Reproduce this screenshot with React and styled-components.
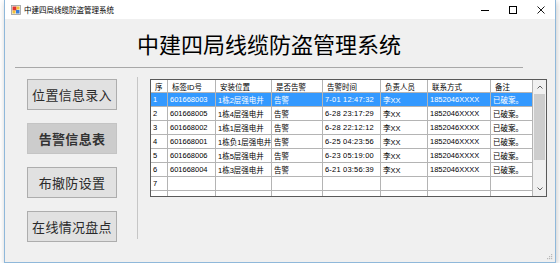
import styled, { createGlobalStyle } from "styled-components";

const GlobalStyle = createGlobalStyle`
    html, body {
        margin: 0;
        padding: 0;
        background: #ffffff;
        font-family: "Noto Sans CJK SC", "Noto Sans", sans-serif;
    }
`

const columns = [
    { title: "序", width: 17 },
    { title: "标签ID号", width: 48 },
    { title: "安装位置", width: 56 },
    { title: "是否告警", width: 51 },
    { title: "告警时间", width: 58 },
    { title: "负责人员", width: 47 },
    { title: "联系方式", width: 63 },
    { title: "备注", width: 42 },
]

const rows = [
    ["1", "601668003", "1栋2层强电井", "告警", "7-01 12:47:32", "李XX", "1852046XXXX", "已破案。"],
    ["2", "601668005", "1栋4层强电井", "告警", "6-28 23:17:29", "李XX", "1852046XXXX", "已破案。"],
    ["3", "601668002", "1栋1层强电井", "告警", "6-28 22:12:12", "李XX", "1852046XXXX", "已破案。"],
    ["4", "601668001", "1栋负1层强电井", "告警", "6-25 04:23:56", "李XX", "1852046XXXX", "已破案。"],
    ["5", "601668006", "1栋5层强电井", "告警", "6-23 05:19:00", "李XX", "1852046XXXX", "已破案。"],
    ["6", "601668004", "1栋3层强电井", "告警", "6-21 03:56:39", "李XX", "1852046XXXX", "已破案。"],
    ["7", "", "", "", "", "", "", ""],
    ["", "", "", "", "", "", "", ""],
]

const menu = ["位置信息录入", "告警信息表", "布撤防设置", "在线情况盘点"]

const Window = styled.div`
    box-sizing: border-box;
    width: 552px;
    height: 263px;
    margin-left: 4px;
    border: 1px solid #8fb8da;
    border-top: none;
    background: #f0f0f0;
    box-shadow: 1px 2px 6px rgba(0, 0, 0, 0.22);
    display: flex;
    flex-direction: column;
    position: relative;
`

const TitleBar = styled.div`
    height: 19px;
    background: #ffffff;
    display: flex;
    align-items: center;
    padding-left: 6px;
    flex-shrink: 0;
`

const Caption = styled.span`
    font-size: 7.5px;
    color: #000;
    margin-left: 3px;
    line-height: 1;
`

const Controls = styled.div`
    margin-left: auto;
    display: flex;
    height: 100%;
`

const ControlButton = styled.div`
    width: 28px;
    height: 100%;
    display: flex;
    align-items: center;
    justify-content: center;
`

const Heading = styled.h1`
    margin: 11px 0 0 10px;
    width: 508px;
    text-align: center;
    font-size: 22px;
    line-height: 26px;
    font-weight: 400;
    color: #000;
`

const Rule = styled.div`
    margin: 11px 0 0 10px;
    width: 508px;
    height: 1px;
    background: #a8a8a8;
`

const Body = styled.div`
    display: flex;
    align-items: flex-start;
    padding: 11px 0 0 22px;
`

const Sidebar = styled.div`
    display: flex;
    flex-direction: column;
    gap: 13px;
    width: 90px;
`

const NavButton = styled.div`
    box-sizing: border-box;
    height: 31px;
    display: flex;
    align-items: center;
    justify-content: center;
    font-size: 13px;
    letter-spacing: 0.3px;
    color: ${p => (p.$active ? "#333333" : "#2a2a2a")};
    font-weight: ${p => (p.$active ? 700 : 400)};
    background: ${p => (p.$active ? "#cccccc" : "#e1e1e1")};
    border: 1px solid ${p => (p.$active ? "#c4c4c4" : "#adadad")};
`

const Divider = styled.div`
    width: 1px;
    height: 162px;
    margin: -2px 12px 0 20px;
    background: #c6c6c6;
`

const GridFrame = styled.div`
    box-sizing: border-box;
    width: 397px;
    height: 118px;
    border: 1px solid #5a5a5a;
    background: #ffffff;
    display: flex;
    overflow: hidden;
`

const Table = styled.div`
    display: grid;
    grid-template-columns: ${p => p.$cols};
    grid-auto-rows: 14px;
    grid-template-rows: 13px;
    align-content: start;
`

const Cell = styled.div`
    box-sizing: border-box;
    border-right: 1px solid #b4b4b4;
    border-bottom: 1px solid #b4b4b4;
    padding-left: ${p => (p.$header ? "4px" : "2px")};
    display: flex;
    align-items: center;
    white-space: nowrap;
    overflow: hidden;
    font-family: "Liberation Sans", "Noto Sans CJK SC", sans-serif;
    font-size: 7.5px;
    color: ${p => (p.$selected ? "#ffffff" : "#000000")};
    background: ${p => (p.$selected ? "#3399ff" : "#ffffff")};
    letter-spacing: ${p => (p.$mono ? "0.2px" : "0")};
`

const Scrollbar = styled.div`
    width: 13px;
    flex-shrink: 0;
    background: #f0f0f0;
    display: flex;
    flex-direction: column;
`

const ScrollArrow = styled.div`
    height: 14px;
    display: flex;
    align-items: center;
    justify-content: center;
    flex-shrink: 0;
`

const Thumb = styled.div`
    height: 66px;
    margin: 0 1px;
    background: #cdcdcd;
`

const Track = styled.div`
    flex: 1;
`

const Grip = styled.svg`
    position: absolute;
    right: 2px;
    bottom: 2px;
`

const AppIcon = () => (
    <svg width="10" height="10" viewBox="0 0 10 10">
        <rect x="0.5" y="0.5" width="9" height="9" fill="#f4f4f4" stroke="#9a9a9a" strokeWidth="0.8" />
        <rect x="1.5" y="1.5" width="4" height="4" fill="#e0332c" />
        <rect x="5.5" y="1.5" width="3" height="3" fill="#f2c037" />
        <rect x="1.5" y="5.5" width="3" height="3" fill="#f2c037" />
        <rect x="5" y="5" width="3.5" height="3.5" fill="#3b7dd8" />
    </svg>
)

const Chevron = ({ up }) => (
    <svg width="6" height="4" viewBox="0 0 6 4">
        <path d={up ? "M0.5 3.5 L3 1 L5.5 3.5" : "M0.5 0.5 L3 3 L5.5 0.5"} fill="none" stroke="#606060" strokeWidth="1" />
    </svg>
)

const App = () => {
    const cols = columns.map(c => `${c.width}px`).join(" ")
    return (
        <>
            <GlobalStyle />
            <Window>
                <TitleBar>
                    <AppIcon />
                    <Caption>中建四局线缆防盗管理系统</Caption>
                    <Controls>
                        <ControlButton>
                            <svg width="8" height="8" viewBox="0 0 8 8">
                                <path d="M0 4.5 H8" stroke="#000" strokeWidth="1" />
                            </svg>
                        </ControlButton>
                        <ControlButton>
                            <svg width="8" height="8" viewBox="0 0 8 8">
                                <rect x="0.5" y="0.5" width="7" height="7" fill="none" stroke="#000" strokeWidth="1" />
                            </svg>
                        </ControlButton>
                        <ControlButton>
                            <svg width="8" height="8" viewBox="0 0 8 8">
                                <path d="M0.5 0.5 L7.5 7.5 M7.5 0.5 L0.5 7.5" stroke="#000" strokeWidth="0.9" />
                            </svg>
                        </ControlButton>
                    </Controls>
                </TitleBar>
                <Heading>中建四局线缆防盗管理系统</Heading>
                <Rule />
                <Body>
                    <Sidebar>
                        {menu.map((m, i) => (
                            <NavButton key={m} $active={i === 1}>{m}</NavButton>
                        ))}
                    </Sidebar>
                    <Divider />
                    <GridFrame>
                        <Table $cols={cols}>
                            {columns.map(c => (
                                <Cell key={c.title} $header>{c.title}</Cell>
                            ))}
                            {rows.map((r, ri) =>
                                r.map((v, ci) => (
                                    <Cell key={`${ri}-${ci}`} $selected={ri === 0} $mono={ci === 4}>{v}</Cell>
                                ))
                            )}
                        </Table>
                        <Scrollbar>
                            <ScrollArrow><Chevron up /></ScrollArrow>
                            <Thumb />
                            <Track />
                            <ScrollArrow><Chevron /></ScrollArrow>
                        </Scrollbar>
                    </GridFrame>
                </Body>
                <Grip width="6" height="6" viewBox="0 0 6 6">
                    <rect x="4" y="0" width="1.2" height="1.2" fill="#b8b8b8" />
                    <rect x="2" y="2" width="1.2" height="1.2" fill="#b8b8b8" />
                    <rect x="4" y="2" width="1.2" height="1.2" fill="#b8b8b8" />
                    <rect x="0" y="4" width="1.2" height="1.2" fill="#b8b8b8" />
                    <rect x="2" y="4" width="1.2" height="1.2" fill="#b8b8b8" />
                    <rect x="4" y="4" width="1.2" height="1.2" fill="#b8b8b8" />
                </Grip>
            </Window>
        </>
    );
}

export default App;
